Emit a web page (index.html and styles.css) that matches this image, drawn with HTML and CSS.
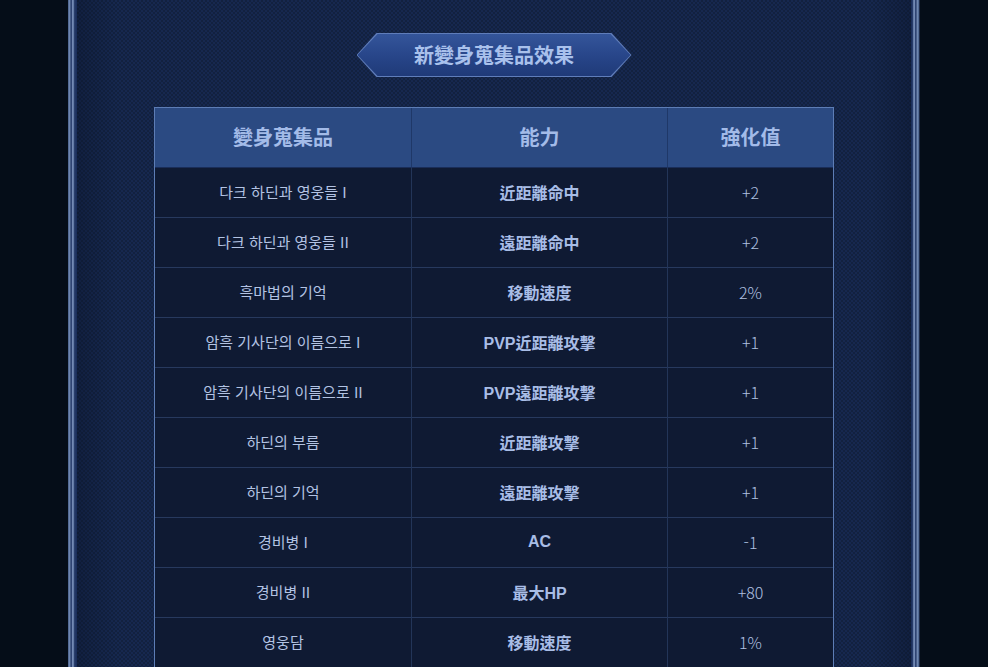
FILE: index.html
```html
<!DOCTYPE html>
<html lang="ko">
<head>
<meta charset="utf-8">
<title>新變身蒐集品效果</title>
<link rel="stylesheet" href="styles.css">
</head>
<body>
<div class="page">
  <div class="frame">
    <div class="panel">
      <div class="badge"><div class="badge-inner">新變身蒐集品效果</div></div>
      <table class="fx">
        <thead>
          <tr><th class="c1">變身蒐集品</th><th class="c2">能力</th><th class="c3">強化值</th></tr>
        </thead>
        <tbody>
          <tr><td>다크 하딘과 영웅들 I</td><td class="ab">近距離命中</td><td class="val">+2</td></tr>
          <tr><td>다크 하딘과 영웅들 II</td><td class="ab">遠距離命中</td><td class="val">+2</td></tr>
          <tr><td>흑마법의 기억</td><td class="ab">移動速度</td><td class="val">2%</td></tr>
          <tr><td>암흑 기사단의 이름으로 I</td><td class="ab">PVP近距離攻擊</td><td class="val">+1</td></tr>
          <tr><td>암흑 기사단의 이름으로 II</td><td class="ab">PVP遠距離攻擊</td><td class="val">+1</td></tr>
          <tr><td>하딘의 부름</td><td class="ab">近距離攻擊</td><td class="val">+1</td></tr>
          <tr><td>하딘의 기억</td><td class="ab">遠距離攻擊</td><td class="val">+1</td></tr>
          <tr><td>경비병 I</td><td class="ab">AC</td><td class="val">-1</td></tr>
          <tr><td>경비병 II</td><td class="ab">最大HP</td><td class="val">+80</td></tr>
          <tr><td>영웅담</td><td class="ab">移動速度</td><td class="val">1%</td></tr>
        </tbody>
      </table>
    </div>
  </div>
</div>
</body>
</html>
```
FILE: styles.css
```css
html, body {
  margin: 0;
  padding: 0;
  height: 667px;
  overflow: hidden;
  background: #050d18;
  font-family: "Noto Sans CJK KR", "Noto Sans", sans-serif;
}

.page {
  display: flex;
  justify-content: center;
  height: 667px;
}

.frame {
  width: 852px;
  padding: 0 9px;
  box-sizing: border-box;
  background:
    linear-gradient(90deg, #536b96 0 1px, #6f86af 1px 2px, #465c87 2px 3px, #2f4473 3px 4px, #7389b3 4px 5px, #6279a5 5px 6px, #2a3f6c 6px 7px, #213563 7px 8px, #1b2f5c 8px 9px) left top / 9px 100% no-repeat,
    linear-gradient(90deg, #1b2f5c 0 1px, #263a68 1px 2px, #6279a5 2px 3px, #7389b3 3px 4px, #2f4473 4px 5px, #465c87 5px 6px, #6f86af 6px 7px, #536b96 7px 8px, #1e2b48 8px 9px) right top / 9px 100% no-repeat,
    #142447;
}

.panel {
  height: 100%;
  padding-top: 33px;
  box-sizing: border-box;
  display: flex;
  flex-direction: column;
  align-items: center;
  background:
    linear-gradient(90deg, rgba(8,16,36,0.35), rgba(8,16,36,0) 40px, rgba(8,16,36,0) calc(100% - 40px), rgba(8,16,36,0.35)),
    repeating-conic-gradient(#16284f 0 25%, #12213f 0 50%) 0 0 / 4px 4px;
}

.badge {
  width: 275px;
  height: 44px;
  flex: none;
  padding: 1px;
  box-sizing: border-box;
  background: #5f7dba;
  clip-path: polygon(0 50%, 20px 0, calc(100% - 20px) 0, 100% 50%, calc(100% - 20px) 100%, 20px 100%);
}

.badge-inner {
  height: 100%;
  display: flex;
  align-items: center;
  justify-content: center;
  background: linear-gradient(180deg, #34559a 0%, #28468a 50%, #1f3a78 100%);
  clip-path: polygon(0 50%, 20px 0, calc(100% - 20px) 0, 100% 50%, calc(100% - 20px) 100%, 20px 100%);
  color: #a9c1ec;
  font-size: 20px;
  font-weight: 700;
  padding-bottom: 1px;
  box-sizing: border-box;
}

.fx {
  margin-top: 30px;
  width: 680px;
  flex: none;
  border-collapse: separate;
  border-spacing: 0;
  border: 1px solid #5d7db5;
  table-layout: fixed;
}

.fx th {
  height: 60px;
  box-sizing: border-box;
  padding: 0 0 2px;
  background: #2b4a82;
  color: #a3bbe8;
  font-size: 20px;
  font-weight: 700;
  border-bottom: 1px solid #1a2d58;
}

.fx th + th { border-left: 1px solid #1f3868; }

.fx .c1 { width: 256px; }
.fx .c2 { width: 256px; }

.fx td {
  height: 50px;
  box-sizing: border-box;
  padding: 0 0 2px;
  text-align: center;
  background: #0f1a33;
  color: #b3c3e3;
  font-size: 15px;
  font-weight: 400;
  border-bottom: 1px solid #27395e;
}

.fx td + td { border-left: 1px solid #233558; }

.fx td.ab {
  font-family: "Liberation Sans", "Noto Sans CJK KR", sans-serif;
  color: #a8bde6;
  font-weight: 700;
  font-size: 16px;
}

.fx td.val {
  color: #b0c0e0;
  font-weight: 300;
  font-size: 16px;
}
```
